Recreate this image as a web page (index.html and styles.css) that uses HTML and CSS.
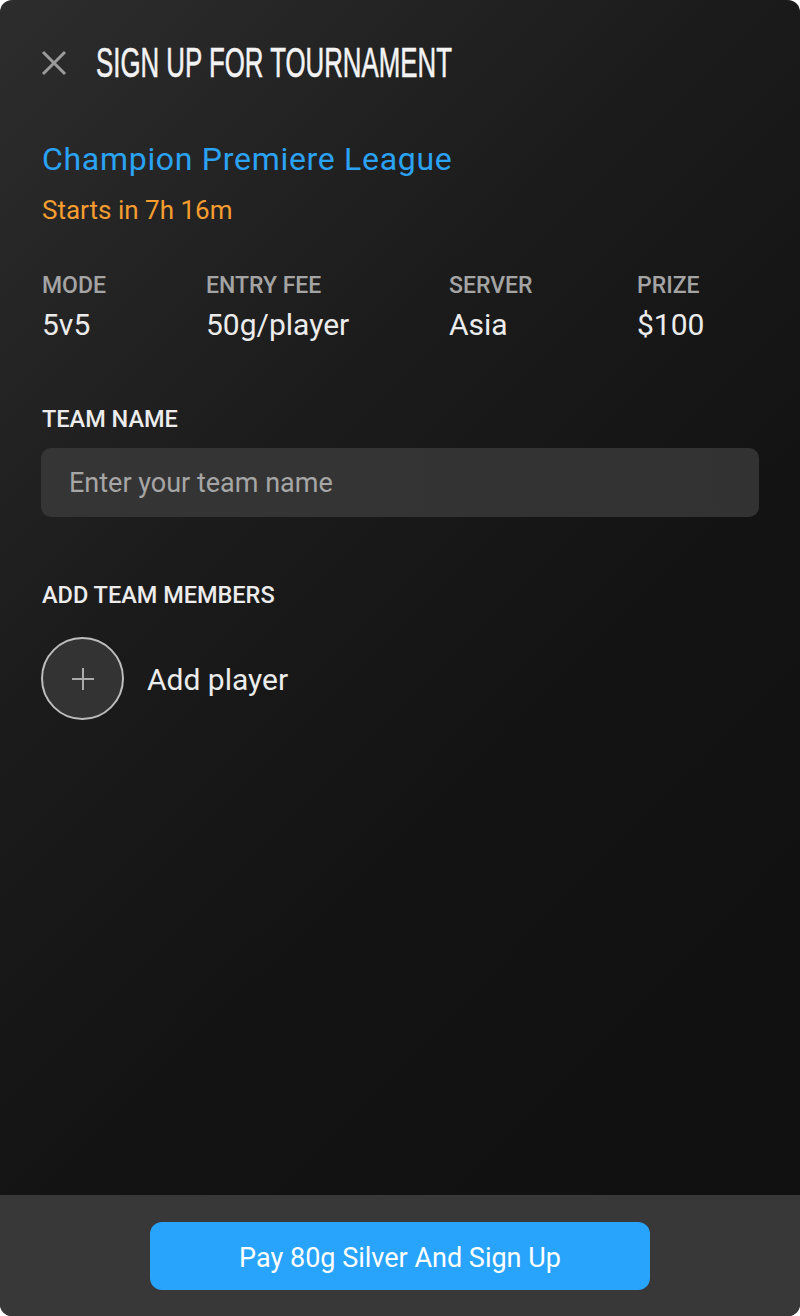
FILE: index.html
```html
<!DOCTYPE html>
<html lang="en">
<head>
<meta charset="utf-8">
<title>Sign up for tournament</title>
<link rel="stylesheet" href="styles.css">
</head>
<body>
<div class="sheet">
  <main class="content">
    <header class="header">
      <button class="close" aria-label="Close">
        <svg width="26" height="26" viewBox="0 0 26 26"><path d="M2 2 L24 24 M24 2 L2 24" stroke="#9b9b9b" stroke-width="3" stroke-linecap="butt" fill="none"/></svg>
      </button>
      <h1 class="title"><span>SIGN UP FOR TOURNAMENT</span></h1>
    </header>

    <section class="event">
      <h2 class="event-name">Champion Premiere League</h2>
      <p class="event-start">Starts in 7h 16m</p>
    </section>

    <section class="facts">
      <div class="fact"><div class="fact-label">MODE</div><div class="fact-value">5v5</div></div>
      <div class="fact"><div class="fact-label">ENTRY FEE</div><div class="fact-value">50g/player</div></div>
      <div class="fact"><div class="fact-label">SERVER</div><div class="fact-value">Asia</div></div>
      <div class="fact"><div class="fact-label">PRIZE</div><div class="fact-value">$100</div></div>
    </section>

    <section class="field">
      <label class="section-label" for="team">TEAM NAME</label>
      <input id="team" class="text-input" type="text" placeholder="Enter your team name">
    </section>

    <section class="members">
      <div class="section-label">ADD TEAM MEMBERS</div>
      <div class="add-player">
        <span class="add-circle">
          <svg width="24" height="24" viewBox="0 0 24 24"><path d="M12 1 V23 M1 12 H23" stroke="#aaaaaa" stroke-width="2" fill="none"/></svg>
        </span>
        <span class="add-text">Add player</span>
      </div>
    </section>
  </main>

  <footer class="footer">
    <button class="pay">Pay 80g Silver And Sign Up</button>
  </footer>
</div>
</body>
</html>
```

FILE: styles.css
```css
* { box-sizing: border-box; }
html, body { margin: 0; padding: 0; background: #ffffff; }
body { font-family: Roboto, "Liberation Sans", sans-serif; }

.sheet {
  width: 800px;
  height: 1316px;
  border-radius: 12px;
  overflow: hidden;
  display: flex;
  flex-direction: column;
  background: linear-gradient(135deg, #2d2d2d 0%, #1b1b1b 35%, #131313 60%, #101010 100%);
}

.content {
  flex: 1;
  padding: 42px 41px 0 41px;
  display: flex;
  flex-direction: column;
}

.header {
  display: flex;
  align-items: center;
  height: 42px;
  gap: 29px;
}
.close {
  width: 26px;
  height: 26px;
  padding: 0;
  border: 0;
  background: none;
  display: flex;
}
.title {
  margin: 0;
  font-family: "Liberation Sans", sans-serif;
  font-weight: 400;
  font-size: 42px;
  line-height: 42px;
  color: #f3f3f3;
  white-space: nowrap;
  -webkit-text-stroke: 0.6px #f3f3f3;
}
.title span {
  display: inline-block;
  transform: scaleX(0.615);
  transform-origin: left center;
}

.event { margin-top: 55px; padding-left: 1px; }
.event-name {
  margin: 0;
  font-size: 32px;
  line-height: 40px;
  font-weight: 400;
  letter-spacing: 0.7px;
  color: #2ba3f5;
}
.event-start {
  margin: 16px 0 0;
  font-size: 26px;
  line-height: 30px;
  color: #f59d2f;
}

.facts {
  margin-top: 47px;
  padding-left: 1px;
  display: grid;
  grid-template-columns: 164px 243px 188px 1fr;
}
.fact-label {
  font-size: 23px;
  line-height: 28px;
  font-weight: 500;
  color: #a4a4a4;
}
.fact-value {
  margin-top: 7px;
  font-size: 30px;
  line-height: 36px;
  color: #ececec;
}

.section-label {
  display: block;
  font-size: 23.5px;
  line-height: 28px;
  font-weight: 500;
  color: #ececec;
  padding-left: 1px;
}

.field { margin-top: 62px; }
.text-input {
  display: block;
  margin-top: 15px;
  width: 718px;
  height: 69px;
  border: 0;
  border-radius: 10px;
  background: linear-gradient(90deg, #353535, #323232);
  padding: 0 28px;
  font-family: Roboto, "Liberation Sans", sans-serif;
  font-size: 27px;
  color: #ececec;
  outline: none;
}
.text-input::placeholder { color: #a6a6a6; }

.members { margin-top: 64px; }
.add-player {
  margin-top: 28px;
  display: flex;
  align-items: center;
  gap: 23px;
}
.add-circle {
  width: 83px;
  height: 83px;
  border-radius: 50%;
  border: 2px solid #bdbdbd;
  background: #333333;
  display: flex;
  align-items: center;
  justify-content: center;
}
.add-text {
  padding-top: 3px;
  font-size: 30px;
  line-height: 36px;
  color: #ececec;
}

.footer {
  height: 121px;
  background: #383838;
  display: flex;
  align-items: center;
  justify-content: center;
}
.pay {
  width: 500px;
  height: 68px;
  border: 0;
  border-radius: 12px;
  background: #29a4fd;
  color: #ffffff;
  padding-top: 5px;
  font-family: Roboto, "Liberation Sans", sans-serif;
  font-size: 27px;
  cursor: pointer;
}
```
